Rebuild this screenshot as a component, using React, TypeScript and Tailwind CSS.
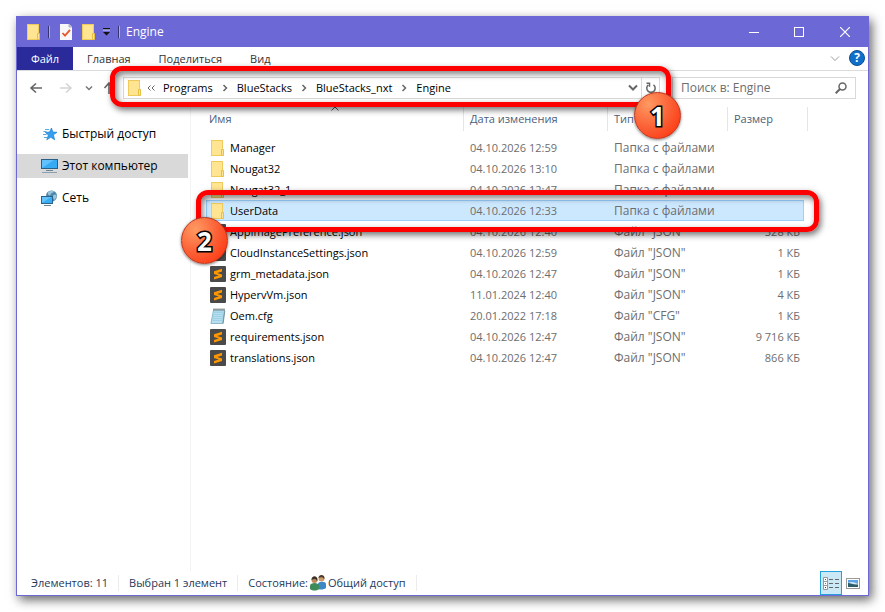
import type { ReactNode } from "react";
import { clsx } from "clsx";

type Kind = "folder" | "json" | "cfg";

const files: {
  name: string;
  date: string;
  type: string;
  size: string;
  kind: Kind;
  selected?: boolean;
}[] = [
  { name: "Manager", date: "04.10.2026 12:59", type: "Папка с файлами", size: "", kind: "folder" },
  { name: "Nougat32", date: "04.10.2026 13:10", type: "Папка с файлами", size: "", kind: "folder" },
  { name: "Nougat32_1", date: "04.10.2026 12:47", type: "Папка с файлами", size: "", kind: "folder" },
  {
    name: "UserData",
    date: "04.10.2026 12:33",
    type: "Папка с файлами",
    size: "",
    kind: "folder",
    selected: true,
  },
  { name: "AppImagePreference.json", date: "04.10.2026 12:40", type: 'Файл "JSON"', size: "328 КБ", kind: "json" },
  { name: "CloudInstanceSettings.json", date: "04.10.2026 12:59", type: 'Файл "JSON"', size: "1 КБ", kind: "json" },
  { name: "grm_metadata.json", date: "04.10.2026 12:47", type: 'Файл "JSON"', size: "1 КБ", kind: "json" },
  { name: "HypervVm.json", date: "11.01.2024 12:40", type: 'Файл "JSON"', size: "4 КБ", kind: "json" },
  { name: "Oem.cfg", date: "20.01.2022 17:18", type: 'Файл "CFG"', size: "1 КБ", kind: "cfg" },
  { name: "requirements.json", date: "04.10.2026 12:47", type: 'Файл "JSON"', size: "9 716 КБ", kind: "json" },
  { name: "translations.json", date: "04.10.2026 12:47", type: 'Файл "JSON"', size: "866 КБ", kind: "json" },
];

const crumbs = ["Programs", "BlueStacks", "BlueStacks_nxt", "Engine"];

function FolderIcon() {
  return (
    <svg className="size-4 shrink-0" viewBox="0 0 16 16">
      <rect x="1" y="0" width="12" height="16" fill="#ffe08a" />
      <rect x="1.5" y="0.5" width="11" height="15" fill="#ffe491" stroke="#efcb5c" />
      <path d="M11.5 9.5h2v6h-2z" fill="#ffe491" stroke="#e8bf45" />
    </svg>
  );
}

function JsonIcon() {
  return (
    <svg className="size-4 shrink-0" viewBox="0 0 16 16">
      <rect width="16" height="16" rx="1" fill="#4a4a4a" />
      <path d="M4 5.3 12 2.8v2.6L7.2 7 12 8.5v2.6l-8 2.5V11l4.8-1.6L4 7.9z" fill="#ff9800" />
    </svg>
  );
}

function CfgIcon() {
  return (
    <svg className="size-4 shrink-0" viewBox="0 0 16 16">
      <path d="M3.5 2h11L12.6 15.5H.9z" fill="#b7dff0" stroke="#7ca9bd" strokeWidth=".8" />
      <path d="M4 3.5h9.6L12 13H2.4z" fill="#9ed2e8" />
      <path d="M4.2 5.5h8.6M3.8 7.5h8.6M3.5 9.5H12M3.2 11.5h8.6" stroke="#c4e6f3" strokeWidth=".6" />
      <path d="M3.5 1.5h11" stroke="#555" strokeWidth="2" strokeDasharray="1 1" />
      <path d="m14.8 3-1.7 12.7" stroke="#5f7f8c" strokeWidth=".8" />
    </svg>
  );
}

const fileIcons: Record<Kind, ReactNode> = {
  folder: <FolderIcon />,
  json: <JsonIcon />,
  cfg: <CfgIcon />,
};

function Chevron({ className, d = "m1 2.5 4 4 4-4" }: { className?: string; d?: string }) {
  return (
    <svg className={clsx("size-[10px] shrink-0", className)} viewBox="0 0 10 10" fill="none" stroke="currentColor">
      <path d={d} />
    </svg>
  );
}

function Badge({ children, className }: { children: ReactNode; className: string }) {
  return (
    <span
      className={clsx(
        "absolute z-20 flex size-[47px] items-center justify-center rounded-full border border-[#b8351c]",
        "bg-radial-[at_30%_25%] from-[#ff9a62] via-[#fb5f35] to-[#ff2a05] shadow-[0_1px_3px_rgba(0,0,0,0.5)]",
        "text-[26px] leading-none font-bold text-white [-webkit-text-stroke:3px_black] [paint-order:stroke_fill]",
        className,
      )}
    >
      {children}
    </span>
  );
}

const frame =
  "pointer-events-none absolute z-10 rounded-xl border-5 border-[#fe0000] shadow-[2px_3px_6px_rgba(0,0,0,0.55),inset_2px_3px_6px_rgba(0,0,0,0.5)]";

function TitleBar() {
  return (
    <header className="flex h-[31px] shrink-0 items-center bg-[#6c69d6] pl-[9px] text-white">
      <FolderIcon />
      <span className="ml-[6px] h-3 w-[2px] border-l border-[#34346f] bg-[#a9a7ea]" />
      <button className="ml-2" aria-label="Свойства">
        <svg className="size-4" viewBox="0 0 16 16">
          <path d="M2 0h9l3 3v13H2z" fill="#f8f8f8" />
          <path d="M11 0v3h3" fill="#c9c9d6" stroke="#9a9ab0" strokeWidth=".7" />
          <path d="m4.5 9 2.5 2.6L12 5.8" fill="none" stroke="#e8572a" strokeWidth="1.8" />
        </svg>
      </button>
      <button className="ml-[7px]" aria-label="Новая папка">
        <FolderIcon />
      </button>
      <button className="ml-[5px]" aria-label="Настройка панели">
        <svg className="size-[9px]" viewBox="0 0 9 9">
          <path d="M1 1h7v1.5H1z" fill="#111" />
          <path d="M1 2.5h7v1H1z" fill="#d5d4f4" />
          <path d="M1 5h7L4.5 8.5z" fill="#111" />
        </svg>
      </button>
      <span className="ml-[7px] h-3 w-[2px] border-l border-[#34346f] bg-[#a9a7ea]" />
      <h1 className="ml-[6px] flex-1 text-xs">Engine</h1>
      <button className="flex h-full w-[45px] items-center justify-center" aria-label="Свернуть">
        <svg className="size-[10px]" viewBox="0 0 10 10" stroke="white">
          <path d="M0 5.5h10" />
        </svg>
      </button>
      <button className="flex h-full w-[46px] items-center justify-center" aria-label="Развернуть">
        <svg className="size-[10px]" viewBox="0 0 10 10" fill="none" stroke="white">
          <rect x=".5" y=".5" width="9" height="9" />
        </svg>
      </button>
      <button className="flex h-full w-[46px] items-center justify-center" aria-label="Закрыть">
        <svg className="size-[10px]" viewBox="0 0 10 10" stroke="white" strokeWidth="1.2">
          <path d="m0 0 10 10M10 0 0 10" />
        </svg>
      </button>
    </header>
  );
}

function Ribbon() {
  return (
    <nav className="flex h-6 shrink-0 items-stretch border-b border-[#dadbdc] text-[#333]">
      <button className="w-14 bg-[#2a2a9b] text-white">Файл</button>
      <button className="px-[14px]">Главная</button>
      <button className="px-[14px]">Поделиться</button>
      <button className="px-[14px]">Вид</button>
      <button className="mr-[9px] ml-auto text-[#999]" aria-label="Развернуть ленту">
        <Chevron />
      </button>
      <button
        className="mt-[3px] mr-[3px] size-4 rounded-full border border-[#0c4f94] bg-[#0f6fc9] text-xs leading-[14px] font-bold text-white"
        aria-label="Справка"
      >
        ?
      </button>
    </nav>
  );
}

function AddressRow() {
  return (
    <div className="flex h-9 shrink-0 items-start pt-[6px] pr-3 pl-3">
      <div className="flex h-[22px] w-[94px] shrink-0 items-center">
        <button aria-label="Назад">
          <svg className="size-[14px]" viewBox="0 0 14 14" fill="none" stroke="#666" strokeWidth="1.6">
            <path d="M13 7H2m5-4.5L2 7l5 4.5" />
          </svg>
        </button>
        <button className="ml-4" aria-label="Вперёд">
          <svg className="size-[14px]" viewBox="0 0 14 14" fill="none" stroke="#d4d4d4" strokeWidth="1.6">
            <path d="M1 7h11M7 2.5 12 7l-5 4.5" />
          </svg>
        </button>
        <button className="ml-[11px] text-[#777]" aria-label="Последние расположения">
          <Chevron className="stroke-[1.5]" d="m2 3.5 3 3 3-3" />
        </button>
        <button className="ml-2" aria-label="Вверх">
          <svg className="size-[14px]" viewBox="0 0 14 14" fill="none" stroke="#666" strokeWidth="1.6">
            <path d="M7 13V2M2.5 7 7 2l4.5 5" />
          </svg>
        </button>
      </div>
      <div className="relative flex h-[22px] min-w-0 flex-1 items-center border border-[#d9d9d9] pl-[3px]">
        <FolderIcon />
        <svg className="ml-1 size-2" viewBox="0 0 8 8" fill="none" stroke="#666">
          <path d="M3.5 1.5 1 4l2.5 2.5M7.500 1.500 5 4l2.500 2.500" />
        </svg>
        {crumbs.map((crumb, i) => (
          <span key={crumb} className="flex items-center">
            {i > 0 && <Chevron className="mx-[3px] stroke-[1.5] text-[#666]" d="m3.5 2 3 3-3 3" />}
            <button className={clsx("text-black", i === 0 ? "mr-1 ml-2" : "mx-1")}>{crumb}</button>
          </span>
        ))}
        <button className="mr-[3px] ml-auto text-[#666]" aria-label="Предыдущие расположения">
          <Chevron className="stroke-2" />
        </button>
        <button
          className="flex h-full w-[18px] items-center justify-center border-l border-[#d9d9d9]"
          aria-label="Обновить"
        >
          <svg className="size-3" viewBox="0 0 12 12" fill="none" stroke="#666" strokeWidth="1.5">
            <path d="M8.500 2.800a4.200 4.200 0 1 1-5.300.2M1.500 1.200v0H4.500v3.600" />
          </svg>
        </button>
        <div className={clsx(frame, "-top-3 -right-3 -bottom-[9px] -left-[14px]")} />
        <Badge className="top-[14px] -right-[22px]">1</Badge>
      </div>
      <label className="ml-3 flex h-[22px] w-[184px] items-center border border-[#d9d9d9] px-2">
        <input
          className="min-w-0 flex-1 text-xs outline-none placeholder:text-[#6d6d6d]"
          placeholder="Поиск в: Engine"
          aria-label="Поиск в: Engine"
        />
        <svg className="size-3" viewBox="0 0 12 12" fill="none" stroke="#666" strokeWidth="1.5">
          <circle cx="7.5" cy="4.5" r="3.5" />
          <path d="M5 7 .7 11.3" strokeWidth="2" />
        </svg>
      </label>
    </div>
  );
}

function SideItem({ icon, label, active }: { icon: ReactNode; label: string; active?: boolean }) {
  return (
    <a
      href="#"
      className={clsx("mr-[2px] flex h-6 items-center gap-1 pl-6 text-xs text-black", active && "bg-[#d9d9d9]")}
    >
      {icon}
      {label}
    </a>
  );
}

function Sidebar() {
  return (
    <aside className="flex w-[174px] shrink-0 flex-col gap-2 border-r border-[#f3f3f3] pt-[15px]">
      <SideItem
        label="Быстрый доступ"
        icon={
          <svg className="size-[17px]" viewBox="0 0 17 17">
            <path
              d="m10.500 2 1.200 4 4.300.3-3.600 2.500 1.300 5-3.900-2.600-4 2.600 1.600-4.800L4.300 6.400l4.300-.4z"
              fill="#35a0ef"
              stroke="#1c7fd0"
              strokeWidth=".7"
            />
            <path d="M4 3.500h4M2.500 5.500h3M2 8.500h3.500M3 11.500h3" stroke="#58a9e0" />
          </svg>
        }
      />
      <SideItem
        active
        label="Этот компьютер"
        icon={
          <svg className="h-4 w-[17px]" viewBox="0 0 17 16">
            <rect x=".5" y="1.5" width="16" height="9" fill="#36aaf5" stroke="#2a5f86" />
            <path d="M1 10V2h12z" fill="#62c1fa" />
            <path d="M5 12.5h7" stroke="#6c8394" />
            <path d="M1 14.5h15" stroke="#8aa0b0" />
          </svg>
        }
      />
      <SideItem
        label="Сеть"
        icon={
          <svg className="size-[17px]" viewBox="0 0 17 17">
            <circle cx="10.5" cy="6" r="5.5" fill="#4d87ad" />
            <path
              d="M7 2.5C9 0 12 .5 13 1.5c-1 2-3 1-3.500 3S6.500 5 7 2.500M12.500 5c2-1.500 3 0 3.300 1.500L13.500 10c-1.500-1-2-3.500-1-5"
              fill="#9cc6da"
            />
            <rect x=".5" y="6.5" width="11" height="7" fill="#38adf5" stroke="#2b6288" />
            <path d="M1 13V7h9z" fill="#66c4fa" />
            <path d="M3 15.5h7" stroke="#6c8394" />
          </svg>
        }
      />
    </aside>
  );
}

function HeaderCell({ children, className }: { children: ReactNode; className?: string }) {
  return (
    <th className={clsx("h-[30px] p-0 text-left align-top font-normal text-[#4c607a]", className)}>
      <div className="relative flex h-6 items-center border-r border-[#e5e5e5]">{children}</div>
    </th>
  );
}

function FileTable() {
  return (
    <main className="min-w-0 flex-1 pr-[60px] pl-[15px]">
      <table className="w-full table-fixed border-separate border-spacing-0 text-left">
        <thead>
          <tr>
            <HeaderCell>
              <span className="pl-[3px]">Имя</span>
              <Chevron
                className="absolute -top-1 left-1/2 -translate-x-1/2 text-[#555]"
                d="m1.5 7.5 3.500-3.500 3.500 3.500"
              />
            </HeaderCell>
            <HeaderCell className="w-36">
              <span className="pl-[6px]">Дата изменения</span>
            </HeaderCell>
            <HeaderCell className="w-[120px]">
              <span className="pl-[6px]">Тип</span>
            </HeaderCell>
            <th className="h-[30px] w-[76px] p-0 pl-[6px] text-left align-top font-normal text-[#4c607a]">
              <div className="flex h-6 items-center">Размер</div>
            </th>
            <th className="w-1 p-0 align-top">
              <div className="h-6 border-r border-[#e5e5e5]" />
            </th>
          </tr>
        </thead>
        <tbody>
          {files.map((file) => {
            const cell = clsx("h-[21px] p-0", file.selected && "border-y border-[#99d1ff] bg-[#cce8ff]");
            return (
              <tr key={file.name} className="relative text-[#6d6d6d]">
                <td className={clsx(cell, file.selected ? "border-l pl-[3px]" : "pl-1")}>
                  <div className="flex items-center gap-1 text-black">
                    {fileIcons[file.kind]}
                    {file.name}
                  </div>
                  {file.selected && (
                    <>
                      <div className={clsx(frame, "-top-[10px] -right-[11px] -bottom-[11px] -left-[10px]")} />
                      <Badge className="top-[17px] -left-[25px]">2</Badge>
                    </>
                  )}
                </td>
                <td className={clsx(cell, "pl-[6px]")}>{file.date}</td>
                <td className={clsx(cell, "pl-[6px] text-xs")}>{file.type}</td>
                <td className={clsx(cell, "pr-1 text-right", file.selected && "border-r")}>{file.size}</td>
                <td className="p-0" />
              </tr>
            );
          })}
        </tbody>
      </table>
    </main>
  );
}

function StatusBar() {
  return (
    <footer className="flex h-6 shrink-0 items-center pl-[14px] text-[#1e395b]">
      <span className="border-r border-[#ececec] pr-[10px]">Элементов: 11</span>
      <span className="border-r border-[#ececec] px-[10px]">Выбран 1 элемент</span>
      <span className="flex items-center border-r border-[#ececec] px-[10px]">
        Состояние:
        <svg className="mx-[2px] size-4" viewBox="0 0 16 16">
          <circle cx="11.5" cy="3.5" r="3" fill="#c99a6b" />
          <path d="M8.5 3c0-4 6-4 6 0l-.5 1c-1-2-3-2-5.500-1" fill="#4a3b2c" />
          <path d="M8 14V9c0-3 8-3 8 0v4c-2 1.500-5 2-8 1" fill="#3d87c4" />
          <circle cx="4.5" cy="5" r="3" fill="#c08a5c" />
          <path d="M1.5 5c0-5 6-5 6 0L7 6c-1-2.500-3-2.500-5.500-1" fill="#3b3129" />
          <path d="M0 14v-3.500c0-3.500 9-3.500 9 0V14c-2.500 2-6.500 2-9 0" fill="#3f8a5a" />
        </svg>
        Общий доступ
      </span>
      <button
        className="ml-auto flex h-full w-[22px] items-center justify-center border border-[#26a0da] bg-[#cbe8f6]"
        aria-label="Таблица"
      >
        <svg className="h-[13px] w-4" viewBox="0 0 16 13" fill="none">
          <path d="M.5.5h4v12h-4zM.5 4.500h4M.5 8.500h4" fill="white" stroke="#999" />
          <path d="M2 2h1v1H2z" fill="#555" />
          <path d="M2 6h1v1H2z" fill="#3b83c8" />
          <path d="M2 10h1v1H2z" fill="#c00" />
          <path d="M6 2.5h4m2 0h4M6 6.500h4m2 0h4M6 10.500h4m2 0h4" stroke="#666" />
        </svg>
      </button>
      <button className="mr-2 ml-1" aria-label="Крупные значки">
        <svg className="h-[11px] w-[14px]" viewBox="0 0 14 11">
          <rect x=".5" y=".5" width="13" height="10" fill="white" stroke="#999" />
          <path d="M2 2h10v7H2z" fill="#5ba3e6" />
          <path d="M2 5c3-2 6-1 10 1v1H2z" fill="#d4e9f7" />
          <path d="M2 5c3 0 5 2 10 1.500V9H2z" fill="#2d5d6b" />
        </svg>
      </button>
    </footer>
  );
}

export default function App() {
  return (
    <div className="h-screen bg-white p-4 font-['Open_Sans','Noto_Sans',sans-serif] text-[11px] leading-4">
      <div className="flex h-full flex-col border border-t-0 border-[#6c69d6] bg-white shadow-[3px_4px_10px_rgba(0,0,0,0.6)]">
        <TitleBar />
        <Ribbon />
        <AddressRow />
        <div className="flex min-h-0 flex-1">
          <Sidebar />
          <FileTable />
        </div>
        <StatusBar />
      </div>
    </div>
  );
}
